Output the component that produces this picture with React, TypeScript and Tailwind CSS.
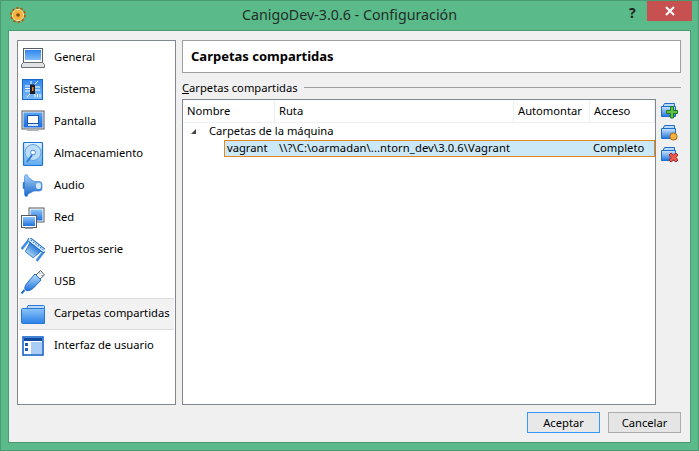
import React from 'react';

const font = { fontFamily: '"Noto Sans", sans-serif' };

function BlueGrad({ id, from = '#8cc4fa', to = '#1f72e0' }: { id: string; from?: string; to?: string }) {
  return (
    <defs>
      <linearGradient id={id} x1="0" y1="0" x2="0" y2="1">
        <stop offset="0" stopColor={from} />
        <stop offset="1" stopColor={to} />
      </linearGradient>
    </defs>
  );
}

function Laptop() {
  return (
    <svg width="24" height="24" viewBox="0 0 24 24">
      <BlueGrad id="lap" from="#2f86ee" to="#7fbdf8" />
      <rect x="2.500" y="2.500" width="19" height="14" fill="#fff" stroke="#5a5d61" />
      <rect x="4" y="4" width="16" height="10" fill="url(#lap)" />
      <path d="M2.500 16.500h19l2 2v3H.5v-3z" fill="#dfe2e5" stroke="#6b6f73" />
    </svg>
  );
}

function SystemIcon() {
  return (
    <svg width="24" height="24" viewBox="0 0 24 24">
      <BlueGrad id="sys" from="#2f86ee" to="#7fbdf8" />
      <rect x="1.500" y="1.500" width="20" height="20" fill="url(#sys)" stroke="#1668cc" />
      <path d="M4 8h5M4 10.500h5M4 13h5M14 9h5M14 12h5M6 19l3-3M14 16v3M16.500 16v3M19 16v3M13 7l4-4M10 6V3" stroke="#fff" strokeWidth="1" />
      <rect x="9" y="6.500" width="5" height="9.500" fill="#1c2026" />
      <rect x="11" y="9" width="1.500" height="4" fill="#e9862a" />
    </svg>
  );
}

function Monitor() {
  return (
    <svg width="24" height="24" viewBox="0 0 24 24">
      <BlueGrad id="mon" from="#5aa5f3" to="#1a6be0" />
      <rect x="1" y="1" width="22" height="18" fill="#eceef0" stroke="#55585c" />
      <rect x="2.500" y="2.500" width="19" height="15" fill="url(#mon)" />
      <rect x="6.500" y="5.500" width="11" height="8" fill="#fff" stroke="#1757b8" />
      <path d="M7 14h10v2H7z" fill="#d7e6f8" />
      <path d="M6 19h12v2H6z" fill="#aeb3b9" />
    </svg>
  );
}

function Disk() {
  return (
    <svg width="24" height="24" viewBox="0 0 24 24">
      <BlueGrad id="dsk" from="#e3f1fd" to="#5ea9ef" />
      <rect x="2.500" y="0.500" width="19" height="23" rx="1" fill="url(#dsk)" stroke="#1b74d6" strokeWidth="1.200" />
      <circle cx="12" cy="10.500" r="8" fill="#bcdcf8" stroke="#5aa3e6" />
      <circle cx="12" cy="10.500" r="2.400" fill="#fff" stroke="#3f8ddd" />
      <path d="M11 13 6 20" stroke="#2a7ad6" strokeWidth="2" />
    </svg>
  );
}

function Speaker() {
  return (
    <svg width="24" height="24" viewBox="0 0 24 24">
      <BlueGrad id="spk" from="#a9d3f7" to="#1766cc" />
      <path d="M5 0.500Q7 0.500 7 3L13 7.500H18Q21 7.500 21 10V14.500Q21 17 18 17H13L7 20Q7 22.500 5 22.500Q3.500 22.500 3.500 19V4Q3.500 0.500 5 0.500Z" fill="url(#spk)" stroke="#2a78d6" strokeWidth="0.600" />
      <rect x="1.800" y="8" width="2" height="7" rx="1" fill="#2a78d6" />
      <rect x="15" y="9" width="5" height="6" rx="2" fill="#d4e8fb" />
    </svg>
  );
}

function Network() {
  return (
    <svg width="24" height="24" viewBox="0 0 24 24">
      <BlueGrad id="net" />
      <rect x="8" y="2" width="15" height="14" fill="#fff" stroke="#55585c" />
      <rect x="9.500" y="3.500" width="12" height="11" fill="url(#net)" />
      <rect x="0.500" y="9.500" width="15" height="12" fill="#fff" stroke="#55585c" />
      <rect x="2" y="11" width="12" height="9" fill="url(#net)" />
      <path d="M4 21.500h8v1.500H4z" fill="#9aa0a6" />
    </svg>
  );
}

function SerialPort() {
  return (
    <svg width="24" height="24" viewBox="0 0 24 24">
      <BlueGrad id="ser" from="#2a78d6" to="#a9d3f7" />
      <g transform="rotate(38 12 12)">
        <path d="M1 4h22l-1 4H2z" fill="#d8ebfb" stroke="#1f6fc9" strokeWidth="1" />
        <path d="M4 5.500h16" stroke="#1f6fc9" strokeDasharray="1.500 1.500" />
        <path d="M5 8h14l-2 10H7z" fill="url(#ser)" stroke="#1f6fc9" strokeWidth="0.800" />
        <rect x="1.500" y="8" width="2" height="10" fill="#3f8ee8" stroke="#1f6fc9" strokeWidth="0.500" />
        <rect x="20.500" y="8" width="2" height="10" fill="#3f8ee8" stroke="#1f6fc9" strokeWidth="0.500" />
      </g>
    </svg>
  );
}

function Usb() {
  return (
    <svg width="24" height="24" viewBox="0 0 24 24">
      <BlueGrad id="usb" from="#bfe0fa" to="#1f72e0" />
      <path d="M15 5 19.500 0.500 23.500 5 19 9z" fill="#f1f2f3" stroke="#5a5f65" />
      <path d="M18 2.500l1 1M20.500 5l1 1" stroke="#5a5f65" />
      <path d="M14 4l6 6-7.500 8c-3 2.500-6.500 3.500-8 2s-.5-4.500 2-7.500z" fill="url(#usb)" stroke="#1f6fc9" />
      <path d="M.5 23.500 3.500 20" stroke="#1f6fc9" strokeWidth="2" />
    </svg>
  );
}

function Folder() {
  return (
    <svg width="24" height="24" viewBox="0 0 24 24">
      <BlueGrad id="fol" from="#8cc4fa" to="#2a80e6" />
      <path d="M7 3.500h15.500a1 1 0 0 1 1 1V8H5z" fill="#b8d9f7" stroke="#2a78d6" />
      <path d="M.5 7.500a1 1 0 0 1 1-1h21a1 1 0 0 1 1 1v14H1.500a1 1 0 0 1-1-1z" fill="url(#fol)" stroke="#2a78d6" />
    </svg>
  );
}

function WindowIcon() {
  return (
    <svg width="24" height="24" viewBox="0 0 24 24">
      <rect x="2" y="3" width="20" height="18" fill="#fff" stroke="#1565c8" strokeWidth="1.600" />
      <rect x="3" y="4" width="18" height="3" fill="#0f4aa0" />
      <rect x="10" y="8" width="11" height="12" fill="#a9cdf7" />
      <rect x="4" y="9" width="3" height="3" fill="#1d5fb8" />
      <rect x="4" y="14" width="3" height="3" fill="#1d5fb8" />
    </svg>
  );
}

function Cog() {
  return (
    <svg width="16" height="16" viewBox="0 0 16 16">
      <circle cx="8" cy="8" r="6.600" fill="none" stroke="#a86412" strokeWidth="2.800" strokeDasharray="2.400 1.750" />
      <circle cx="8" cy="8" r="5.600" fill="#f5b23d" stroke="#fbe0a0" />
      <circle cx="8" cy="8" r="1.800" fill="#7a4a10" />
    </svg>
  );
}

function ToolFolder({ kind }: { kind: 'add' | 'edit' | 'del' }) {
  return (
    <svg width="17" height="16" viewBox="0 0 17 16">
      <BlueGrad id={`tool-${kind}`} from="#cfe6fb" to="#1f72e0" />
      <path d="M3.500.5h10v3H2z" fill="#b8d9f7" stroke="#1f6fc9" />
      <path d="M.5 3.500h14v10H.5z" fill={`url(#tool-${kind})`} stroke="#1f6fc9" />
      {kind === 'add' && <path d="M9.500 2.500h3v4h4v3h-4v4.500h-3V9.500h-4v-3h4z" transform="translate(0 1)" fill="#5fc244" stroke="#1f7a1c" />}
      {kind === 'edit' && <circle cx="12.500" cy="11.500" r="3.600" fill="#f5b23d" stroke="#a86412" />}
      {kind === 'del' && <path d="M8 8l2-2 2.500 2L15 6l2 2-2 2.500 2 2.500-2 2-2.500-2L10 15l-2-2 2-2.500z" fill="#ec5a4c" stroke="#a82a20" />}
    </svg>
  );
}

const items = [
  { label: 'General', icon: <Laptop /> },
  { label: 'Sistema', icon: <SystemIcon /> },
  { label: 'Pantalla', icon: <Monitor /> },
  { label: 'Almacenamiento', icon: <Disk /> },
  { label: 'Audio', icon: <Speaker /> },
  { label: 'Red', icon: <Network /> },
  { label: 'Puertos serie', icon: <SerialPort /> },
  { label: 'USB', icon: <Usb /> },
  { label: 'Carpetas compartidas', icon: <Folder />, active: true },
  { label: 'Interfaz de usuario', icon: <WindowIcon /> },
];

const columns = [
  { label: 'Nombre', w: 'w-[92px]' },
  { label: 'Ruta', w: 'w-[239px]' },
  { label: 'Automontar', w: 'w-[76px]' },
  { label: 'Acceso', w: 'flex-1' },
];

export default function App() {
  return (
    <div className="w-[699px] h-[451px] bg-[#5bba8a] border border-[#4a9a72] text-[11.2px] text-black flex flex-col overflow-hidden" style={font}>
      {/* barra de titulo */}
      <div className="h-[29px] relative flex items-center justify-center shrink-0">
        <div className="absolute left-[9px] top-[6px]">
          <Cog />
        </div>
        <span className="text-[14.25px] text-[#1f2f28] pb-[1px]">CanigoDev-3.0.6 - Configuración</span>
        <span className="absolute left-[628px] top-[1px] text-[14px] font-bold text-[#222]">?</span>
        <div className="absolute right-[6px] top-0 w-[45px] h-[20px] bg-[#c75050] flex items-center justify-center">
          <svg width="10" height="10" viewBox="0 0 10 10">
            <path d="M1 1l8 8M9 1l-8 8" stroke="#fff" strokeWidth="2" />
          </svg>
        </div>
      </div>

      <div className="mx-[7px] h-[413px] bg-[#f0f0f0] border border-[#4a9a72] pt-[9px] px-[8px] flex flex-col">
        <div className="flex h-[365px] gap-[6px]">
          {/* lista lateral */}
          <div className="w-[159px] bg-white border border-[#828790] flex flex-col pt-px">
            {items.map((item) => (
              <div
                key={item.label}
                className={
                  item.active
                    ? 'h-[32px] flex items-center bg-[#f2f2f2] border-y border-[#dcdcdc] mx-px pl-[2px]'
                    : 'h-[32px] flex items-center mx-px pl-[2px]'
                }
              >
                <div className="w-[24px] mr-[9px] shrink-0 flex">{item.icon}</div>
                <span className="whitespace-nowrap pb-px">{item.label}</span>
              </div>
            ))}
          </div>

          {/* panel derecho */}
          <div className="w-[499px] flex flex-col">
            <div className="h-[33px] shrink-0 bg-white border border-[#a0a0a0] flex items-center pl-[8px] text-[13px] font-bold">
              Carpetas compartidas
            </div>
            <div className="h-[26px] shrink-0 flex items-end pb-[4px]">
              <span className="whitespace-nowrap leading-[14px]">
                <span className="underline">C</span>arpetas compartidas
              </span>
              <div className="flex-1 h-px bg-[#a0a0a0] ml-[6px] mb-[7px]" />
            </div>
            <div className="flex-1 flex gap-[5px]">
              <div className="w-[474px] h-[306px] bg-white border border-[#828790] flex flex-col">
                <div className="h-[23px] flex border-b border-[#eaf0f8]">
                  {columns.map((c) => (
                    <div key={c.label} className={`${c.w} border-r border-[#eaf0f8] pl-[4px] flex items-center`}>
                      {c.label}
                    </div>
                  ))}
                </div>
                <div className="h-[17px] flex items-center pl-[8px]">
                  <span className="w-0 h-0 border-l-[5px] border-l-transparent border-b-[5px] border-b-[#444] mr-[13px]" />
                  <span>Carpetas de la máquina</span>
                </div>
                <div className="h-[17px] ml-[41px] bg-[#cbe8f6] border border-[#e0861e] flex items-center whitespace-nowrap">
                  <span className="w-[54px] pl-[2px]">vagrant</span>
                  <span className="w-[314px] tracking-[0.1px]">\\?\C:\oarmadan\...ntorn_dev\3.0.6\Vagrant</span>
                  <span>Completo</span>
                </div>
              </div>
              <div className="flex flex-col gap-[6px] pt-[4px]">
                <ToolFolder kind="add" />
                <ToolFolder kind="edit" />
                <ToolFolder kind="del" />
              </div>
            </div>
          </div>
        </div>

        {/* botones */}
        <div className="flex justify-end gap-[8px] mt-[7px] mr-[1px]">
          <button className="w-[73px] h-[21px] bg-[#e8e8e8] border border-[#3399ff] leading-none">Aceptar</button>
          <button className="w-[73px] h-[21px] bg-[#e5e5e5] border border-[#acacac] leading-none">Cancelar</button>
        </div>
      </div>
    </div>
  );
}
